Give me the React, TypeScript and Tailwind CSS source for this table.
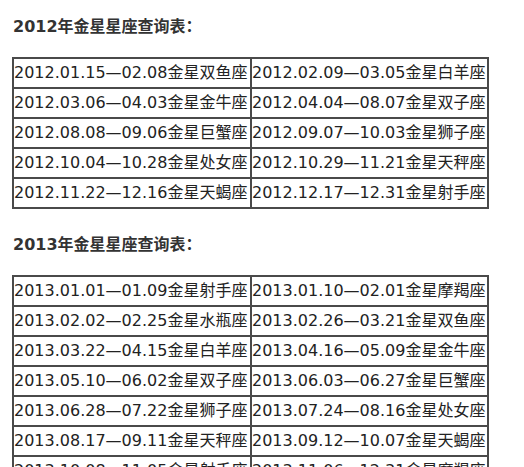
import React from 'react';

const venus2012: [string, string][] = [
  ['2012.01.15—02.08金星双鱼座', '2012.02.09—03.05金星白羊座'],
  ['2012.03.06—04.03金星金牛座', '2012.04.04—08.07金星双子座'],
  ['2012.08.08—09.06金星巨蟹座', '2012.09.07—10.03金星狮子座'],
  ['2012.10.04—10.28金星处女座', '2012.10.29—11.21金星天秤座'],
  ['2012.11.22—12.16金星天蝎座', '2012.12.17—12.31金星射手座'],
];

const venus2013: [string, string][] = [
  ['2013.01.01—01.09金星射手座', '2013.01.10—02.01金星摩羯座'],
  ['2013.02.02—02.25金星水瓶座', '2013.02.26—03.21金星双鱼座'],
  ['2013.03.22—04.15金星白羊座', '2013.04.16—05.09金星金牛座'],
  ['2013.05.10—06.02金星双子座', '2013.06.03—06.27金星巨蟹座'],
  ['2013.06.28—07.22金星狮子座', '2013.07.24—08.16金星处女座'],
  ['2013.08.17—09.11金星天秤座', '2013.09.12—10.07金星天蝎座'],
  ['2013.10.08—11.05金星射手座', '2013.11.06—12.31金星摩羯座'],
];

const font = { fontFamily: '"DejaVu Sans", "Noto Sans CJK SC", sans-serif' };

const VenusTable = ({ rows }: { rows: [string, string][] }) => (
  <table className="table-fixed border-collapse w-[477px] ml-[12px]">
    <colgroup>
      <col className="w-[238px]" />
      <col />
    </colgroup>
    <tbody>
      {rows.map(([a, b]) => (
        <tr key={a} className="h-[30px]">
          <td className="border-2 border-[#4a4a4a] px-0 text-[16px] leading-[26px] text-[#222] whitespace-nowrap overflow-hidden">{a}</td>
          <td className="border-2 border-[#4a4a4a] px-0 text-[16px] leading-[26px] text-[#222] whitespace-nowrap overflow-hidden">{b}</td>
        </tr>
      ))}
    </tbody>
  </table>
);

export default function App() {
  return (
    <div className="w-[524px] h-[467px] bg-white overflow-hidden pt-[15px]" style={font}>
      <h2 className="ml-[13px] text-[16px] leading-[24px] font-bold text-[#333] mb-[18px]">2012年金星星座查询表：</h2>
      <VenusTable rows={venus2012} />
      <h2 className="ml-[13px] mt-[24px] text-[16px] leading-[24px] font-bold text-[#333] mb-[18px]">2013年金星星座查询表：</h2>
      <VenusTable rows={venus2013} />
    </div>
  );
}
